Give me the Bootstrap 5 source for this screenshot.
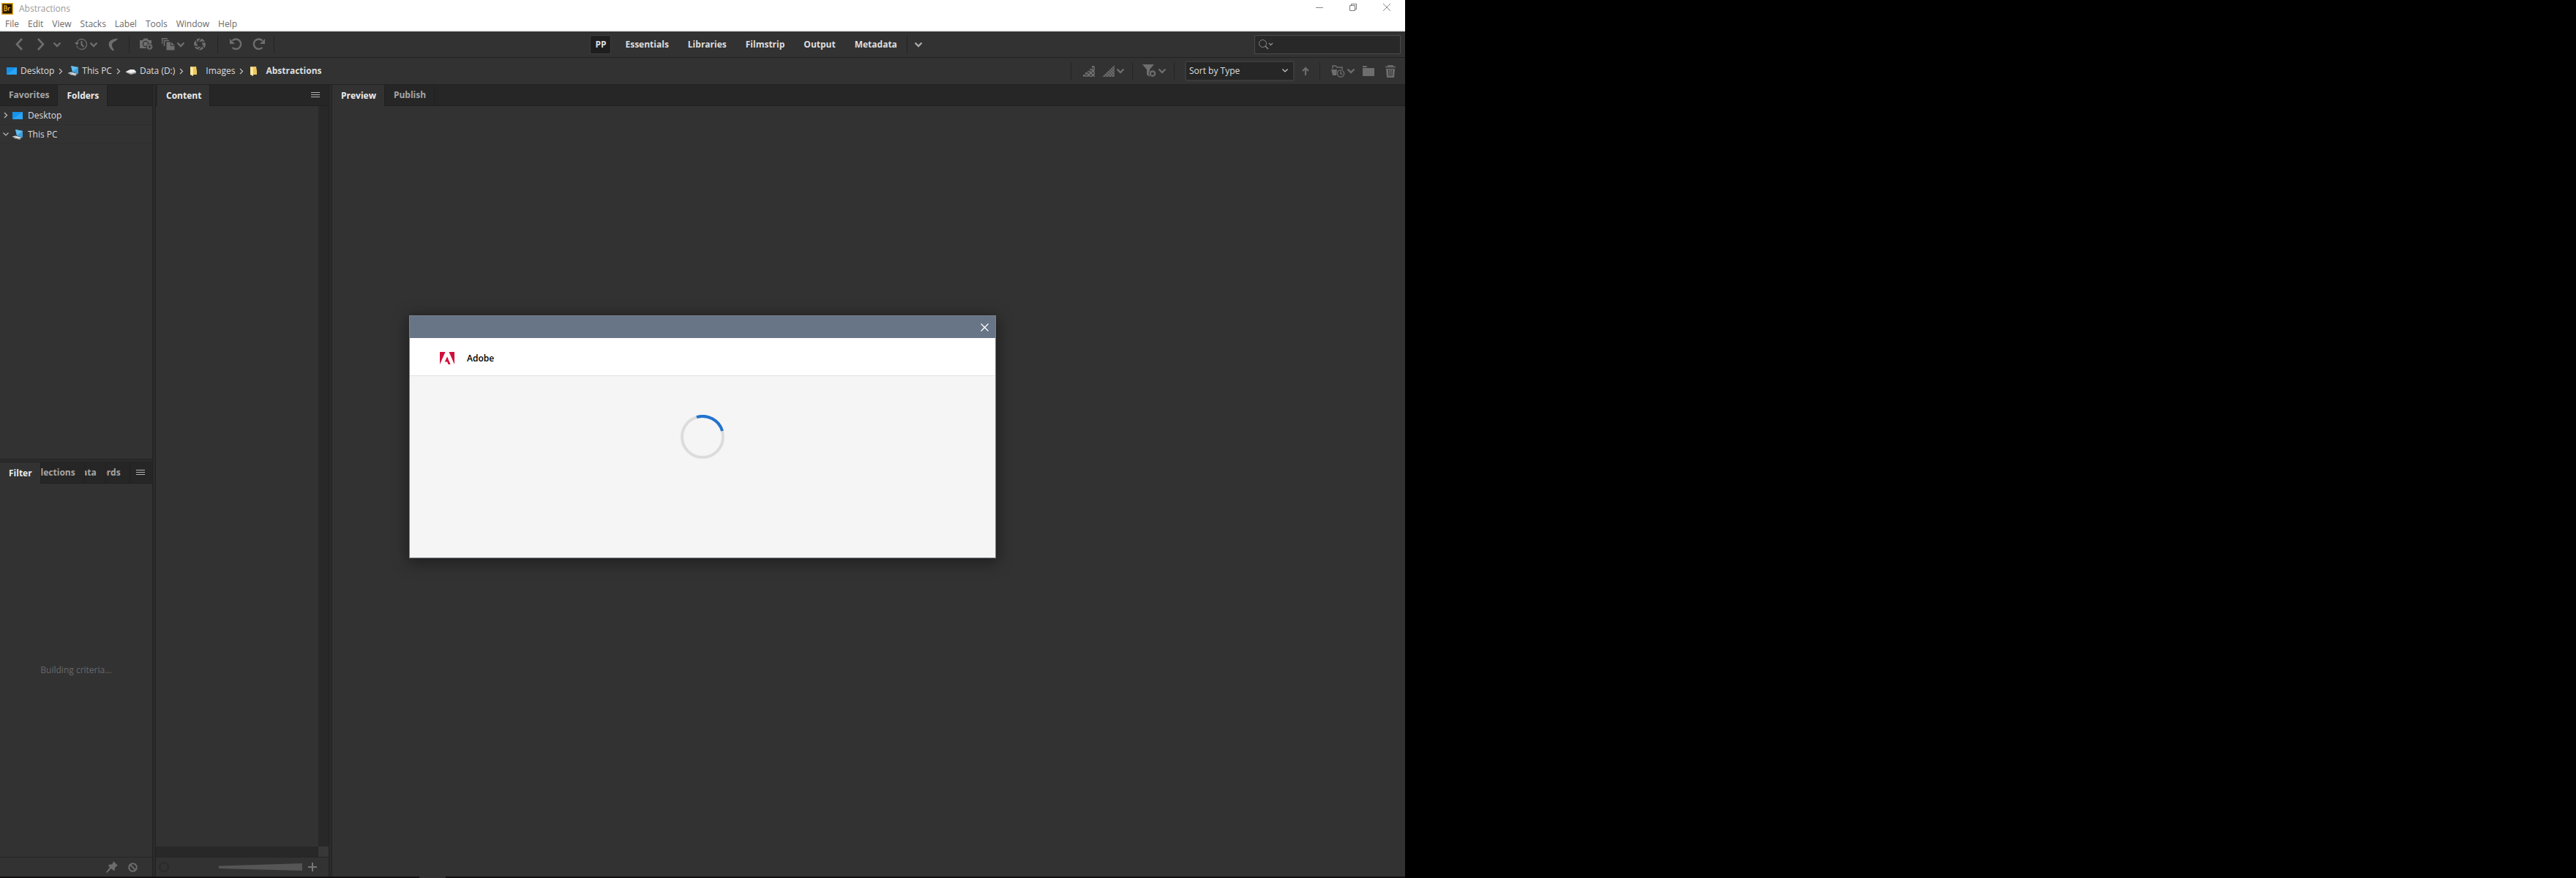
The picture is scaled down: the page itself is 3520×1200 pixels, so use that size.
<!DOCTYPE html>
<html lang="en">
<head>
<meta charset="utf-8">
<meta name="viewport" content="width=device-width, initial-scale=1">
<title>Abstractions</title>
<link href="https://cdn.jsdelivr.net/npm/bootstrap@5.3.0/dist/css/bootstrap.min.css" rel="stylesheet">
<script src="https://cdn.jsdelivr.net/npm/bootstrap@5.3.0/dist/js/bootstrap.bundle.min.js" defer></script>
<style>
:root{--bg:#323232;--dark:#262626;--line:#222;--dim:#6e6e6e;--text:#dedede}
body{background:#000;font:12px/16px "Open Sans","Noto Sans",sans-serif;color:var(--text)}
a{color:inherit;text-decoration:none}
button{background:none;border:0;padding:0;color:inherit;font:inherit;display:flex;align-items:center}
svg{display:block;flex:none}
.desk{min-height:100vh}
.app{flex:12 1 0;background:var(--bg)}
.second-screen{flex:10 1 0}
.titlebar{height:24px;background:#fff;color:#999;padding-left:2px}
.winctl{height:20px;padding-right:2px}
.winctl button{width:46px;height:20px;justify-content:center}
.menus{height:19px;background:#fff;color:#6a6a6a;padding-left:7px;gap:12px;border-bottom:2px solid #eceeed;line-height:17px}
.tools{height:36px;border-bottom:1px solid var(--line);color:var(--dim)}
.tools-left{flex:0 0 42%;padding-left:20px}
.s2{margin-left:2px}.s10{margin-left:10px}.s12{margin-left:12px}.s14{margin-left:14px}.s16{margin-left:16px}.s18{margin-left:18px}
.vsep{width:1px;height:24px;background:#242424}
.ws{color:var(--text);font-weight:700}
.ws button{height:26px;padding:0 13px}
.ws .current{background:#1e1e1e;border:1px solid #3d3d3d;border-radius:3px;padding:0 6px;margin-right:6px}
.ws .more{padding:0 0 0 9px;color:#aaa}
.find{width:200px;height:26px;border:1px solid #4a4a4a;background:#282828;margin-right:6px;padding-left:5px;border-radius:1px;color:#888}
.find input{background:none;border:0;outline:0;color:#ddd;min-width:0;flex:1}
.pathbar{height:37px;border-bottom:1px solid var(--line);padding:0 12px 0 8px}
.crumbs{gap:6px}
.crumbs a{display:flex;align-items:center;gap:4px}
.acts{color:var(--dim)}
.sortbox{position:relative}
.sortbox select{appearance:none;width:150px;height:28px;background:#262626;border:2px solid #3b3b3b;border-radius:3px;color:#dedede;font:inherit;padding:0 4px}
.sortbox svg{position:absolute;right:9px;top:11px;pointer-events:none;color:#ccc}
.main-area{min-height:0}
.lcol{width:209px;border-right:1px solid var(--line)}
.ccol{width:238px;border:solid var(--line);border-width:0 1px}
.pcol{border-left:1px solid var(--line)}
.gutter{width:3px;background:#2b2b2b}
.hgutter{height:5px;background:#2b2b2b;border:solid var(--line);border-width:1px 0}
.tabrow{height:29px;background:var(--dark);border-bottom:1px solid #202020}
.tabrow button{height:28px;padding:0 11px 0 12px;font-weight:700;color:#a5a5a5;border-right:1px solid #202020}
.tabrow .on{background:var(--bg);color:#ececec;height:29px}
.tabrow .burger{border:0;color:#b5b5b5;padding:0}
.tabrow .cut{padding:0 12px 0 0;overflow:hidden;justify-content:flex-end}
.cut-l{width:60px}.cut-m{width:29px}.cut-s{width:33px}
.folders{flex:0 0 482px}
.folders a{display:flex;align-items:center;height:26px;border-bottom:1px solid #2e2e2e;padding-left:4px}
.folders a svg+svg{margin:0 6px 0 4px}
.waiting{color:#686868}
.panefoot{height:27px;border-top:1px solid #252525;color:#6c6c6c}
.vbar{width:14px;background:#282828}
.hbar{height:14px;background:#282828}
.corner{width:14px;height:14px;background:#373737}
.ring{width:14px;height:14px;border:2px solid #2a2a2a;border-radius:50%}
.edge{height:2px;background:#121011}
.edge span{display:block;width:36px;height:2px;margin-left:573px;background:#333031}
.veil{position:absolute;inset:0 0 6px 0}
.dlg{width:802px;height:332px;border:1px solid #7b8491;background:#f5f5f5;box-shadow:0 4px 20px 2px rgba(0,0,0,.4)}
.dlg-top{height:30px;background:#687587;padding-right:9px}
.dlg-head{height:52px;background:#fff;border-bottom:1px solid #e3e3e3;padding:4px 0 0 41px;color:#000;font-weight:600;gap:17px}
.dlg-wait{padding-top:53px}
</style>
</head>
<body>
<svg width="0" height="0" class="position-absolute" aria-hidden="true">
 <symbol id="chev" viewBox="0 0 12 8"><path d="M1.500 1.500L6 6L10.500 1.500" fill="none" stroke="currentColor" stroke-width="2.400"/></symbol>
 <symbol id="thin" viewBox="0 0 8 5"><path d="M.5.5L4 4L7.500.5" fill="none" stroke="currentColor" stroke-width="1.200"/></symbol>
 <symbol id="next" viewBox="0 0 6 9"><path d="M1 1L4.500 4.500L1 8" fill="none" stroke="#bbb" stroke-width="1.300"/></symbol>
 <symbol id="screen" viewBox="0 0 16 16"><path d="M1 3H15V13H1Z" fill="#1593ec"/><path d="M1 13L15 3V13Z" fill="#2aa5f8"/></symbol>
 <symbol id="pc" viewBox="0 0 16 16"><path d="M5 1L15 3V12L7 9.500Z" fill="#3da0dd"/><path d="M5 1L15 3L7 9Z" fill="#62bdee"/><path d="M1 10.500L5 9.500L14 12L10 14L7 13L5 13.500Z" fill="#d4dade"/><path d="M1 11L6 12M7 13.500L12 14.500" stroke="#8e979c"/></symbol>
 <symbol id="disk" viewBox="0 0 16 16"><path d="M1 9L7 6H12L15 9V11L8 13L1 10Z" fill="#a8a8a8"/><path d="M1 9L7 6H12L15 9L8 11Z" fill="#eee"/></symbol>
 <symbol id="fold" viewBox="0 0 16 16"><path d="M3 2H11L12 8V13H3Z" fill="#edc65c"/><path d="M3 2L7 4V15L3 13Z" fill="#ffe9a0"/></symbol>
 <symbol id="burger" viewBox="0 0 12 8"><path d="M0 .5H12M0 3.500H12M0 6.500H12" stroke="currentColor"/></symbol>
 <symbol id="undo" viewBox="0 0 17 17"><path d="M3.500 3.500A6.800 6.800 0 1 1 3.500 13" fill="none" stroke="currentColor" stroke-width="2.400"/><path d="M0 1V8H7Z" fill="currentColor"/></symbol>
 <pattern id="chk" width="6" height="6" patternUnits="userSpaceOnUse"><path d="M0 0H6V6H0Z" fill="#4c4c4c"/><path d="M0 0H3V3H0ZM3 3H6V6H3Z" fill="#707070"/></pattern>
 <pattern id="chk2" width="4" height="4" patternUnits="userSpaceOnUse"><path d="M0 0H4V4H0Z" fill="#505050"/><path d="M0 0H2V2H0ZM2 2H4V4H2Z" fill="#6c6c6c"/></pattern>
</svg>

<div class="desk d-flex">
 <div class="app d-flex flex-column position-relative">
  <header>
   <div class="titlebar d-flex justify-content-between">
    <div class="d-flex align-items-center gap-1"><svg width="16" height="16" viewBox="0 0 16 16" aria-label="Br"><rect x=".75" y=".75" width="14.500" height="14.500" fill="#251500" stroke="#e0a51d" stroke-width="1.500"/><path d="M4 4V10.500H6.500L7.500 9.500V8L6.500 7.200L7.200 6.400V5L6.300 4ZM4 7.200H6.500M9.500 10.800V6M9.500 7.500Q10 6.300 12 6.300" fill="none" stroke="#e0a51d" stroke-width="1.300"/></svg><span class="ms-1">Abstractions</span></div>
    <div class="winctl d-flex">
     <button aria-label="Minimize"><svg width="10" height="10"><path d="M0 5.500H10" stroke="#888"/></svg></button>
     <button aria-label="Restore"><svg width="10" height="10"><path d="M.5 2.500H7.500V9.500H.5ZM2.500 2.500V.5H9.500V7.500H7.500" fill="none" stroke="#777"/></svg></button>
     <button aria-label="Close"><svg width="10" height="10"><path d="M0 0L10 10M10 0L0 10" stroke="#888"/></svg></button>
    </div>
   </div>
   <nav class="menus d-flex"><a href="#">File</a><a href="#">Edit</a><a href="#">View</a><a href="#">Stacks</a><a href="#">Label</a><a href="#">Tools</a><a href="#">Window</a><a href="#">Help</a></nav>
   <div class="tools d-flex align-items-center">
    <div class="tools-left d-flex align-items-center">
     <button aria-label="Back"><svg width="12" height="17"><path d="M10 1L3 8.500L10 16" fill="none" stroke="currentColor" stroke-width="2.600"/></svg></button>
     <button class="s18" aria-label="Forward"><svg width="12" height="17"><path d="M2 1L9 8.500L2 16" fill="none" stroke="currentColor" stroke-width="2.600"/></svg></button>
     <button class="s10" aria-label="History"><svg width="12" height="8"><use href="#chev"/></svg></button>
     <button class="s18" aria-label="Recent"><svg width="18" height="17" viewBox="0 0 18 17" fill="none" stroke="currentColor"><path d="M3 10A7 7 0 1 0 5 3" stroke="none"/><path d="M3 6A7 7 0 1 1 9.500 15.500" stroke-width="1.300"/><path d="M3 11Q5 15 9 15.500" stroke-width="1.500" stroke-dasharray="2 1"/><path d="M9.500 4V9L12.500 12" stroke-width="2"/><path d="M0 6H6L3 10Z" fill="currentColor" stroke="none"/></svg></button>
     <button class="s2" aria-label="Recent list"><svg width="12" height="8"><use href="#chev"/></svg></button>
     <button class="s14" aria-label="Boomerang"><svg width="14" height="18"><path d="M13.500.5L9 1Q0 3 .5 9Q1 14 6.500 17.500L8 16Q4.500 12 5 9Q5.500 5.500 10 4Z" fill="currentColor"/></svg></button>
     <span class="vsep s14"></span>
     <button class="s14" aria-label="Get photos"><svg width="18" height="17" viewBox="0 0 18 17"><path d="M0 3H4L5.500.5H10.500L12 3H16V9A5 5 0 0 0 9 14H0Z" fill="currentColor"/><circle cx="8" cy="8" r="3.600" fill="none" stroke="#323232" stroke-width="1.200"/><circle cx="13.500" cy="12" r="4.300" fill="currentColor" stroke="#323232" stroke-width=".8"/><path d="M11 12H16M13.500 9.500V14.500" stroke="#323232" stroke-width="1.200"/></svg></button>
     <button class="s12" aria-label="Refine"><svg width="18" height="17" viewBox="0 0 18 17"><path d="M.5 8V.7H8M3.500 11V3.500H10" fill="none" stroke="currentColor" stroke-width="1.600"/><path d="M6.500 5.500H13L17.500 10V16.500H6.500Z" fill="currentColor"/><path d="M12.500 5.500V10.500H17.500" fill="none" stroke="#323232"/></svg></button>
     <button class="s2" aria-label="Refine list"><svg width="12" height="8"><use href="#chev"/></svg></button>
     <button class="s12" aria-label="Open in Camera Raw"><svg width="16" height="17" viewBox="0 0 16 17"><circle cx="8" cy="8.500" r="5.700" fill="none" stroke="currentColor" stroke-width="4.500"/><path d="M5 6.500L10 0M9.500 5L16 6M11.500 9L13.500 15M11 11L5 17M6 12L0 11M4.500 8.500L3 2" stroke="#323232" stroke-width="1.300"/></svg></button>
     <span class="vsep s16"></span>
     <button class="s16" aria-label="Rotate left"><svg width="17" height="17"><use href="#undo"/></svg></button>
     <button class="s14" aria-label="Rotate right"><svg width="17" height="17"><use href="#undo" transform="translate(17 0) scale(-1 1)"/></svg></button>
     <span class="vsep s12"></span>
    </div>
    <nav class="ws d-flex align-items-center" aria-label="Workspaces">
     <button class="current">PP</button><button>Essentials</button><button>Libraries</button><button>Filmstrip</button><button>Output</button><button>Metadata</button><span class="vsep"></span><button class="more" aria-label="More workspaces"><svg width="12" height="8"><use href="#chev"/></svg></button>
    </nav>
    <label class="find d-flex align-items-center ms-auto"><svg width="20" height="14" viewBox="0 0 20 14" fill="none" stroke="currentColor"><circle cx="5.500" cy="5.500" r="5"/><path d="M9 9L13 13" stroke-width="1.400"/><path d="M14 5L16.500 7.500L19 5" stroke-width="1.500"/></svg><input type="text" aria-label="Search"></label>
   </div>
   <div class="pathbar d-flex align-items-center justify-content-between">
    <nav class="crumbs d-flex align-items-center" aria-label="Path">
     <a href="#"><svg width="16" height="16"><use href="#screen"/></svg>Desktop</a><svg width="6" height="9"><use href="#next"/></svg>
     <a href="#"><svg width="16" height="16"><use href="#pc"/></svg>This PC</a><svg width="6" height="9"><use href="#next"/></svg>
     <a href="#"><svg width="16" height="16"><use href="#disk"/></svg>Data (D:)</a><svg width="6" height="9"><use href="#next"/></svg>
     <a href="#"><svg width="16" height="16"><use href="#fold"/></svg><span class="ms-1">Images</span></a><svg width="6" height="9"><use href="#next"/></svg>
     <a href="#" class="fw-bold"><svg width="16" height="16"><use href="#fold"/></svg><span class="ms-1">Abstractions</span></a>
    </nav>
    <div class="acts d-flex align-items-center">
     <span class="vsep"></span>
     <button class="s16" aria-label="Preview quality"><svg width="16" height="16"><path d="M0 16V13H3V10H6V8H9V5H12V1H16V16Z" fill="url(#chk)"/></svg></button>
     <button class="s10" aria-label="Thumbnail quality"><svg width="17" height="16"><path d="M0 16L17 0V16Z" fill="url(#chk2)"/></svg></button>
     <button class="s2" aria-label="Quality options"><svg width="12" height="8"><use href="#chev"/></svg></button>
     <span class="vsep s10"></span>
     <button class="s12" aria-label="Filter by rating"><svg width="20" height="18" viewBox="0 0 20 18"><path d="M1 0H17L11 7V17L7 14V7Z" fill="currentColor"/><circle cx="15" cy="12.500" r="4.800" fill="currentColor" stroke="#323232"/><path d="M15 9.500L15.900 11.600L18 11.800L16.400 13.200L17 15.300L15 14.200L13 15.300L13.600 13.200L12 11.800L14.100 11.600Z" fill="#323232"/></svg></button>
     <button class="s2" aria-label="Filter options"><svg width="12" height="8"><use href="#chev"/></svg></button>
     <span class="vsep s10"></span>
     <div class="sortbox s14"><select aria-label="Sort"><option>Sort by Type</option></select><svg width="8" height="5"><use href="#thin"/></svg></div>
     <button class="s10" aria-label="Ascending"><svg width="10" height="12"><path d="M5 12V2M1 6L5 2L9 6" fill="none" stroke="currentColor" stroke-width="2.200"/></svg></button>
     <span class="vsep s14"></span>
     <button class="s14" aria-label="Open recent file"><svg width="20" height="17" viewBox="0 0 20 17"><path d="M3 5V1H7L9 3H16V6" fill="none" stroke="currentColor" stroke-width="1.400"/><path d="M1 6H9L8 14H3Z" fill="currentColor"/><circle cx="14" cy="11.500" r="4.600" fill="none" stroke="currentColor" stroke-width="1.400"/><path d="M14 8.500V12H16" fill="none" stroke="currentColor" stroke-width="1.400"/></svg></button>
     <button class="s2" aria-label="Recent files"><svg width="12" height="8"><use href="#chev"/></svg></button>
     <button class="s10" aria-label="New folder"><svg width="16" height="14"><path d="M0 0H5L6.500 2H0ZM0 3H16V14H0Z" fill="currentColor"/></svg></button>
     <button class="s14" aria-label="Delete"><svg width="16" height="17"><path d="M1 2.500H15M5 2V.7H11V2" fill="none" stroke="currentColor" stroke-width="1.500"/><path d="M2 5H14L13 17H3Z" fill="currentColor"/><path d="M5.500 6L6 15M8 6V15M10.500 6L10 15" stroke="#323232"/></svg></button>
    </div>
   </div>
  </header>

  <main class="main-area d-flex flex-fill">
   <section class="lcol d-flex flex-column">
    <div class="tabrow d-flex"><button>Favorites</button><button class="on">Folders</button></div>
    <div class="folders">
     <a href="#"><svg width="8" height="9" viewBox="-1 0 8 9"><use href="#next" width="6" height="9"/></svg><svg width="16" height="16"><use href="#screen"/></svg>Desktop</a>
     <a href="#"><svg width="8" height="5" color="#bbb"><use href="#thin"/></svg><svg width="16" height="16"><use href="#pc"/></svg>This PC</a>
    </div>
    <div class="hgutter"></div>
    <div class="tabrow d-flex"><button class="on">Filter</button><button class="cut cut-l">lections</button><button class="cut cut-m">ata</button><button class="cut cut-s">ords</button><button class="burger ms-2" aria-label="Panel menu"><svg width="12" height="8"><use href="#burger"/></svg></button></div>
    <div class="waiting flex-fill d-flex align-items-center justify-content-center">Building criteria...</div>
    <div class="panefoot d-flex align-items-center justify-content-end pe-3">
     <button class="s14" aria-label="Pin"><svg width="16" height="16"><path d="M10 0L16 6L14 7L12 9L12 12L10.500 13L7 10L1 16L0 15L5 8.500L3 6L4.500 4.500L7.500 4.500L9.500 2.500Z" fill="currentColor"/></svg></button>
     <button class="s14 me-1" aria-label="Clear filter"><svg width="13" height="13"><circle cx="6.500" cy="6.500" r="5.300" fill="none" stroke="currentColor" stroke-width="2"/><path d="M3 3L10 10" stroke="currentColor" stroke-width="2"/></svg></button>
    </div>
   </section>
   <div class="gutter"></div>
   <section class="ccol d-flex flex-column">
    <div class="tabrow d-flex"><button class="on s2">Content</button><button class="burger ms-auto me-2 pe-1" aria-label="Panel menu"><svg width="12" height="8"><use href="#burger"/></svg></button></div>
    <div class="d-flex flex-fill"><div class="flex-fill"></div><div class="vbar"></div></div>
    <div class="d-flex"><div class="hbar flex-fill"></div><div class="corner"></div></div>
    <div class="panefoot d-flex align-items-center">
     <span class="ring ms-1"></span>
     <svg class="ms-auto" width="114" height="10" aria-label="Thumbnail size"><path d="M0 3.500L114 0V10L0 7Z" fill="#555"/></svg>
     <button class="ms-2 me-3" aria-label="Larger thumbnails"><svg width="12" height="12"><path d="M0 6H12M6 0V12" stroke="#777" stroke-width="2"/></svg></button>
    </div>
   </section>
   <div class="gutter"></div>
   <section class="pcol flex-fill">
    <div class="tabrow d-flex"><button class="on">Preview</button><button>Publish</button></div>
   </section>
  </main>
  <div class="edge"><span></span></div>

  <div class="veil d-flex align-items-center justify-content-center">
   <div class="dlg" role="dialog" aria-label="Adobe">
    <div class="dlg-top d-flex align-items-center justify-content-end"><button aria-label="Close"><svg width="11" height="11"><path d="M.5.5L10.500 10.500M10.500.5L.5 10.500" stroke="#fff" stroke-width="1.300"/></svg></button></div>
    <div class="dlg-head d-flex align-items-center"><svg width="20" height="17" viewBox="0 0 20 17"><path d="M0 0H7.500L0 17ZM12.500 0H20V17ZM10 6.200L14.500 17H11.500L10.200 13.600H6.900Z" fill="#d0103a"/></svg><span>Adobe</span></div>
    <div class="dlg-wait d-flex justify-content-center" role="status" aria-label="Loading"><svg width="60" height="60" viewBox="0 0 60 60" fill="none" stroke-width="4"><circle cx="30" cy="30" r="28" stroke="#dcdcdc"/><path d="M21.900 3.200A28 28 0 0 1 57 22" stroke="#2273cf"/></svg></div>
   </div>
  </div>
 </div>
 <div class="second-screen"></div>
</div>
</body>
</html>
